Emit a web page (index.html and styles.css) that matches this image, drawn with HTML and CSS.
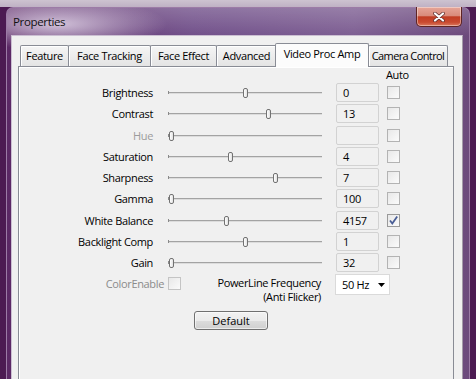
FILE: index.html
```html
<!DOCTYPE html>
<html lang="en">
<head>
    <meta charset="UTF-8">
    <title>Properties</title>
    <link rel="stylesheet" href="styles.css">
</head>
<body>
    <div class="window">
        <div class="titlebar">
            <span class="title">Properties</span>
            <button class="close-btn">
                <svg width="12" height="10" viewBox="0 0 12 10">
                    <path d="M2 1.5 L10 8.5 M10 1.5 L2 8.5" stroke="#5a2a2a" stroke-width="3.6" stroke-linecap="round"/>
                    <path d="M2 1.5 L10 8.5 M10 1.5 L2 8.5" stroke="#fff" stroke-width="2.2" stroke-linecap="round"/>
                </svg>
            </button>
        </div>

        <div class="client">
            <div class="tabs">
                <div class="tab tab-feature">Feature</div>
                <div class="tab tab-tracking">Face Tracking</div>
                <div class="tab tab-effect">Face Effect</div>
                <div class="tab tab-advanced">Advanced</div>
                <div class="tab tab-amp active">Video Proc Amp</div>
                <div class="tab tab-camera">Camera Control</div>
            </div>

            <div class="panel">
                <div class="auto-head">Auto</div>

                <div class="row">
                    <span class="label">Brightness</span>
                    <div class="slider"><span class="thumb" style="left: 75px"></span></div>
                    <div class="value">0</div>
                    <span class="check"></span>
                </div>
                <div class="row">
                    <span class="label">Contrast</span>
                    <div class="slider"><span class="thumb" style="left: 98px"></span></div>
                    <div class="value">13</div>
                    <span class="check"></span>
                </div>
                <div class="row disabled">
                    <span class="label">Hue</span>
                    <div class="slider"><span class="thumb" style="left: 1px"></span></div>
                    <div class="value"></div>
                    <span class="check"></span>
                </div>
                <div class="row">
                    <span class="label">Saturation</span>
                    <div class="slider"><span class="thumb" style="left: 60px"></span></div>
                    <div class="value">4</div>
                    <span class="check"></span>
                </div>
                <div class="row">
                    <span class="label">Sharpness</span>
                    <div class="slider"><span class="thumb" style="left: 105px"></span></div>
                    <div class="value">7</div>
                    <span class="check"></span>
                </div>
                <div class="row">
                    <span class="label">Gamma</span>
                    <div class="slider"><span class="thumb" style="left: 1px"></span></div>
                    <div class="value">100</div>
                    <span class="check"></span>
                </div>
                <div class="row">
                    <span class="label">White Balance</span>
                    <div class="slider"><span class="thumb" style="left: 56px"></span></div>
                    <div class="value">4157</div>
                    <span class="check checked">
                        <svg width="11" height="11" viewBox="0 0 11 11">
                            <path d="M2 5.5 L4.3 8.5 L9.2 1.5" fill="none" stroke="#4a5e96" stroke-width="1.8"/>
                        </svg>
                    </span>
                </div>
                <div class="row">
                    <span class="label">Backlight Comp</span>
                    <div class="slider"><span class="thumb" style="left: 75px"></span></div>
                    <div class="value">1</div>
                    <span class="check"></span>
                </div>
                <div class="row">
                    <span class="label">Gain</span>
                    <div class="slider"><span class="thumb" style="left: 1px"></span></div>
                    <div class="value">32</div>
                    <span class="check"></span>
                </div>

                <div class="extra">
                    <div class="color-enable">
                        <span>ColorEnable</span>
                        <span class="check dim"></span>
                    </div>
                    <div class="powerline">
                        <span class="pl-line">PowerLine Frequency</span>
                        <span class="pl-line">(Anti Flicker)</span>
                    </div>
                    <div class="freq-select">
                        <span>50 Hz</span>
                        <svg width="7" height="4" viewBox="0 0 7 4"><path d="M0 0 H7 L3.5 4 Z" fill="#000"/></svg>
                    </div>
                </div>

                <div class="actions">
                    <button class="default-btn">Default</button>
                </div>
            </div>
        </div>
    </div>
</body>
</html>
```

FILE: styles.css
```css
* {
    box-sizing: border-box;
}

body {
    margin: 0;
    width: 476px;
    height: 379px;
    overflow: hidden;
    background: linear-gradient(to bottom, #cdc3d0 0, #bfb1c4 7px, transparent 7px), #4c1a52;
    font-family: "Open Sans", sans-serif;
    font-size: 11px;
    letter-spacing: -0.35px;
    color: #000;
}

/* window frame */
.window {
    margin: 7px 0 0 6px;
    width: 464px;
    height: 372px;
    padding: 0 6px 0 4px;
    border: 1px solid #9c7ba6;
    border-bottom: none;
    border-radius: 7px 7px 0 0;
    background:
        radial-gradient(ellipse 110px 26px at 50px 16px, rgba(214, 200, 222, 0.95), rgba(214, 200, 222, 0)),
        linear-gradient(to bottom, rgba(255, 255, 255, 0.2), rgba(255, 255, 255, 0) 28px),
        linear-gradient(to right, #5b2865 0, #71508a 40%, #7d5e92 75%, #6c4a7c 100%);
}

.titlebar {
    display: flex;
    justify-content: space-between;
    align-items: flex-start;
    height: 27px;
    padding-left: 2px;
}

.title {
    padding-top: 6px;
    line-height: 16px;
    font-size: 11.5px;
    color: #111;
}

.close-btn {
    width: 46px;
    height: 20px;
    margin: -1px 1px 0 0;
    padding: 0;
    display: flex;
    align-items: center;
    justify-content: center;
    border: 1px solid #5e2424;
    border-top: none;
    border-radius: 0 0 5px 5px;
    background: linear-gradient(to bottom, #e6a598 0, #d98b7b 45%, #c13d24 52%, #c94a30 80%, #dc7a5e 100%);
    box-shadow: inset 0 0 0 1px rgba(255, 255, 255, 0.4);
}

/* dialog client area */
.client {
    height: 345px;
    padding: 0 8px 0 6px;
    background: #f0f0f0;
    border: 1px solid #cbbfd2;
    border-right-color: #a39aa8;
    border-bottom: none;
}

.tabs {
    position: relative;
    z-index: 1;
    display: flex;
    align-items: flex-end;
    height: 24px;
    margin-top: 7px;
    margin-bottom: -1px;
    padding-left: 2px;
}

.tab {
    height: 21px;
    margin-bottom: 1px;
    margin-left: -1px;
    border: 1px solid #898c95;
    border-bottom: none;
    border-radius: 2px 2px 0 0;
    background: linear-gradient(to bottom, #f5f5f5, #e4e4e4);
    box-shadow: inset 1px 1px 0 #fff;
    text-align: center;
    line-height: 19px;
    white-space: nowrap;
    overflow: hidden;
}

.tab-feature { width: 49px; margin-left: 0; }
.tab-tracking { width: 83px; }
.tab-effect { width: 67px; }
.tab-advanced { width: 61px; }
.tab-camera { width: 80px; letter-spacing: -0.6px; }

.tab.active {
    position: relative;
    z-index: 2;
    width: 94px;
    height: 24px;
    margin-bottom: 0;
    margin-left: -2px;
    background: #fcfcfc;
    box-shadow: none;
}

.panel {
    height: 320px;
    border: 1px solid #898c95;
    border-bottom: none;
    background: #f0f0f0;
    box-shadow: inset 1px 1px 0 #fff;
}

.auto-head {
    height: 16px;
    line-height: 16px;
    padding-left: 367px;
}

.row {
    display: flex;
    align-items: flex-start;
    height: 21.25px;
}

.label {
    width: 134px;
    text-align: right;
    line-height: 19px;
    white-space: nowrap;
}

.row.disabled .label {
    color: #9c9c9c;
}

.slider {
    position: relative;
    width: 154px;
    height: 19px;
    margin-left: 15px;
    background:
        linear-gradient(#8a8a8a, #8a8a8a) 0 8px / 1px 3px no-repeat,
        linear-gradient(#a3a3a3, #a3a3a3) 0 9px / 100% 1px no-repeat,
        linear-gradient(#dcdcdc, #dcdcdc) 0 10px / 100% 1px no-repeat;
}

.thumb {
    position: absolute;
    top: 5px;
    width: 5px;
    height: 10px;
    border: 1px solid #727272;
    border-radius: 2px;
    background: linear-gradient(to right, #ffffff, #e2e2e2);
}

.value {
    width: 43px;
    height: 19px;
    margin-left: 14px;
    padding-left: 6px;
    border: 1px solid #d2d2d2;
    border-radius: 2px;
    line-height: 17px;
}

.check {
    display: flex;
    align-items: center;
    justify-content: center;
    width: 13px;
    height: 13px;
    margin: 3px 0 0 8px;
    border: 1px solid #b3b3b3;
    background: linear-gradient(135deg, #e8e8e8, #fbfbfb);
}

.check.checked {
    border-color: #9a9a9a;
}

.check.dim {
    margin: 0;
    border-color: #c4c4c4;
}

.extra {
    display: flex;
    align-items: flex-start;
    height: 29px;
}

.color-enable {
    display: flex;
    justify-content: flex-end;
    align-items: center;
    gap: 4px;
    width: 162px;
    margin-top: 3px;
    line-height: 13px;
    color: #8b8b8b;
}

.powerline {
    display: flex;
    flex-direction: column;
    align-items: flex-end;
    width: 140px;
    margin-top: 2px;
    white-space: nowrap;
}

.pl-line {
    height: 14px;
    line-height: 14px;
}

.freq-select {
    display: flex;
    align-items: center;
    justify-content: space-between;
    width: 55px;
    height: 21px;
    margin-left: 14px;
    padding: 0 4px 0 6px;
    background: #fff;
    border: 1px solid #dadada;
}

.actions {
    margin-top: 8px;
    padding-left: 175px;
}

.default-btn {
    width: 74px;
    height: 19px;
    padding: 0;
    border: 1px solid #707070;
    border-radius: 3px;
    background: linear-gradient(to bottom, #f2f2f2 0, #ebebeb 50%, #dddddd 50%, #cfcfcf 100%);
    box-shadow: inset 0 0 0 1px rgba(255, 255, 255, 0.6);
    font: inherit;
    color: #000;
    line-height: 16px;
}
```
